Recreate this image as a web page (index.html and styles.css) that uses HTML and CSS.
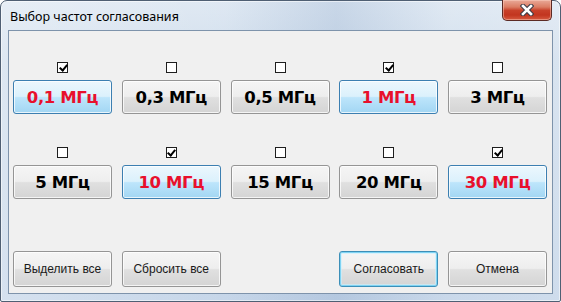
FILE: index.html
```html
<!DOCTYPE html>
<html>
<head>
<meta charset="utf-8">
<link rel="stylesheet" href="styles.css">
</head>
<body>
<div class="window">
  <div class="titlebar">
    <span class="title">Выбор частот согласования</span>
    <div class="close">
      <svg width="14" height="12" viewBox="0 0 14 12">
        <path d="M3 2 L11 10 M11 2 L3 10" stroke="#3b3b45" stroke-width="4.6" stroke-linecap="square" fill="none"/>
        <path d="M3 2 L11 10 M11 2 L3 10" stroke="#ffffff" stroke-width="2.6" stroke-linecap="square" fill="none"/>
      </svg>
    </div>
  </div>
  <div class="client">
    <div class="grid freq">
      <div class="cell"><span class="cb on"></span><button class="btn big sel">0,1 МГц</button></div>
      <div class="cell"><span class="cb"></span><button class="btn big">0,3 МГц</button></div>
      <div class="cell"><span class="cb"></span><button class="btn big">0,5 МГц</button></div>
      <div class="cell"><span class="cb on"></span><button class="btn big sel">1 МГц</button></div>
      <div class="cell"><span class="cb"></span><button class="btn big">3 МГц</button></div>
      <div class="cell"><span class="cb"></span><button class="btn big">5 МГц</button></div>
      <div class="cell"><span class="cb on"></span><button class="btn big sel">10 МГц</button></div>
      <div class="cell"><span class="cb"></span><button class="btn big">15 МГц</button></div>
      <div class="cell"><span class="cb"></span><button class="btn big">20 МГц</button></div>
      <div class="cell"><span class="cb on"></span><button class="btn big sel">30 МГц</button></div>
    </div>
    <div class="grid actions">
      <button class="btn small">Выделить все</button>
      <button class="btn small">Сбросить все</button>
      <span></span>
      <button class="btn small def">Согласовать</button>
      <button class="btn small">Отмена</button>
    </div>
  </div>
</div>
</body>
</html>
```
FILE: styles.css
```css
html, body {
  margin: 0;
  padding: 0;
  background: #ffffff;
}
.window {
  width: 561px;
  height: 302px;
  box-sizing: border-box;
  border: 1px solid #4f5f73;
  border-radius: 7px 7px 2px 2px;
  padding: 0 7px 7px 7px;
  display: flex;
  flex-direction: column;
  background:
    linear-gradient(90deg, rgba(255,255,255,0.3) 0%, rgba(255,255,255,0.05) 40%, rgba(120,150,190,0.2) 60%, rgba(255,255,255,0.1) 80%, rgba(255,255,255,0.2) 100%),
    linear-gradient(180deg, #dde7f2 0%, #cfddec 20%, #c3d4e8 100%);
  box-shadow: inset 0 0 0 1px rgba(255,255,255,0.55);
  font-family: "Liberation Sans", Arial, sans-serif;
}
.titlebar {
  height: 29px;
  display: flex;
  align-items: flex-start;
  flex: none;
}
.title {
  font-family: "Noto Sans", "Open Sans", sans-serif;
  font-size: 12.5px;
  color: #000;
  margin-left: 2px;
  margin-top: 7px;
  line-height: 17px;
}
.close {
  margin-left: auto;
  margin-right: 1px;
  margin-top: -1px;
  width: 50px;
  height: 21px;
  box-sizing: border-box;
  border: 1px solid #5b2a24;
  border-top: none;
  border-radius: 0 0 5px 5px;
  background: linear-gradient(180deg, #e9a998 0%, #db7d64 35%, #c8412a 52%, #c2351f 75%, #d65a40 100%);
  box-shadow: inset 0 0 0 1px rgba(255,215,200,0.45);
  display: flex;
  align-items: center;
  justify-content: center;
}
.client {
  flex: 1;
  border: 1px solid #7e93ab;
  background: #f0f0f0;
  padding: 31px 0 0 4px;
}
.grid {
  display: grid;
  grid-template-columns: repeat(5, 99px);
  column-gap: 9.75px;
}
.freq {
  row-gap: 33px;
}
.cell {
  display: flex;
  flex-direction: column;
  align-items: center;
}
.cb {
  width: 11px;
  height: 11px;
  box-sizing: border-box;
  border: 1px solid #1e1e1e;
  background: #fff;
  margin-bottom: 7px;
  position: relative;
}
.cb.on::after {
  content: "";
  position: absolute;
  left: 2.5px;
  top: -0.5px;
  width: 3px;
  height: 6px;
  border: solid #000;
  border-width: 0 2px 2px 0;
  transform: rotate(40deg);
}
.btn {
  width: 99px;
  box-sizing: border-box;
  margin: 0;
  padding: 0;
  border: 1px solid #959595;
  border-radius: 3px;
  background: linear-gradient(180deg, #f5f5f5 0%, #eeeeee 48%, #e0e0e0 52%, #d4d4d4 100%);
  box-shadow: inset 0 0 0 1px rgba(255,255,255,0.75);
  color: #000;
  display: flex;
  align-items: center;
  justify-content: center;
}
.big {
  height: 34px;
  font-family: "DejaVu Sans", sans-serif;
  font-weight: bold;
  font-size: 16.5px;
  letter-spacing: -0.4px;
}
.sel {
  border-color: #3c7fb1;
  background: linear-gradient(180deg, #ecf7fd 0%, #dbf1fc 48%, #bde5fb 52%, #a2d6f3 100%);
  color: #e8102c;
}
.actions {
  margin-top: 52px;
}
.small {
  height: 36px;
  font-family: "Liberation Sans", Arial, sans-serif;
  font-size: 12px;
  color: #1a1a1a;
}
.def {
  border-color: #3c8fb8;
  box-shadow: inset 0 0 0 1px #7fd3f3, inset 0 0 0 2px rgba(200,240,255,0.6);
}
```
